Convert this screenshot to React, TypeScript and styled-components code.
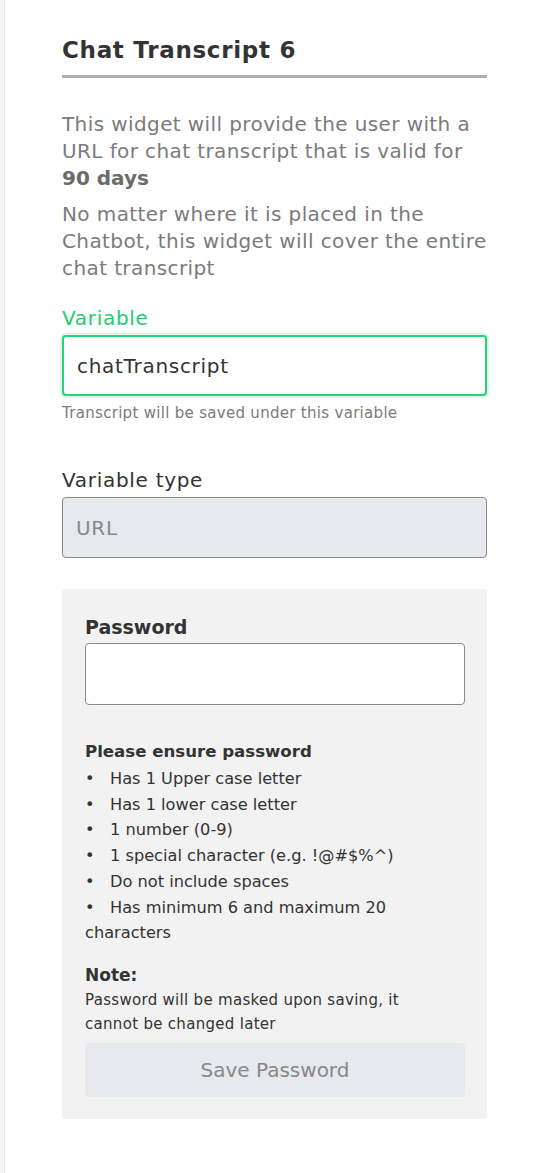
import React from "react";
import styled, { createGlobalStyle } from "styled-components";

const GlobalStyle = createGlobalStyle`
  html, body {
    margin: 0;
    padding: 0;
    background: #ffffff;
  }
  body {
    font-family: "DejaVu Sans", "Noto Sans", sans-serif;
  }
  * { box-sizing: border-box; }
`;

const Page = styled.div`
  display: flex;
  min-height: 1173px;
`;

const Rail = styled.div`
  width: 5px;
  flex: none;
  background: #f5f5f7;
  border-right: 1px solid #e4e4ea;
`;

const Content = styled.div`
  width: 425px;
  margin-left: 57px;
  padding-top: 34px;
  display: flex;
  flex-direction: column;
`;

const Title = styled.h1`
  margin: 0;
  font-size: 23px;
  font-weight: 700;
  letter-spacing: 0.7px;
  color: #333333;
  line-height: 32px;
  padding-bottom: 9px;
  border-bottom: 3px solid #abafb1;
`;

const Desc = styled.p`
  margin: 0;
  font-size: 20px;
  letter-spacing: 0.4px;
  line-height: 27px;
  color: #7b7b7b;
  & + & { margin-top: 9px; }
  b { font-weight: 700; color: #6b6b6b; letter-spacing: 0; }
`;

const DescBlock = styled.div`
  margin-top: 33px;
`;

const Label = styled.label<{ $active?: boolean }>`
  display: block;
  font-size: 20px;
  letter-spacing: 0.7px;
  line-height: 26px;
  color: ${p => (p.$active ? "#1fcc6e" : "#333333")};
  margin-bottom: 4px;
`;

const Field = styled.div<{ $gap: number }>`
  margin-top: ${p => p.$gap}px;
`;

const TextInput = styled.input<{ $focus?: boolean }>`
  display: block;
  width: 100%;
  height: 61px;
  padding: 0 13px;
  font-family: inherit;
  font-size: 20px;
  letter-spacing: 0.7px;
  color: ${p => (p.$focus ? "#333333" : "#888888")};
  background: ${p => (p.$focus ? "#ffffff" : "#e8e9ee")};
  border: ${p => (p.$focus ? "2px solid #2ad37a" : "1px solid #8a8a8a")};
  border-radius: 4px;
  box-shadow: ${p => (p.$focus ? "0 0 0 2px #dff5ea" : "none")};
  outline: none;
  caret-color: #333;
`;

const Help = styled.div`
  margin-top: 8px;
  font-size: 15px;
  letter-spacing: 0.3px;
  color: #7b7b7b;
`;

const Panel = styled.section`
  margin-top: 31px;
  background: #f2f2f2;
  border-radius: 4px;
  padding: 25px 22px 22px 23px;
`;

const PanelLabel = styled.div`
  font-size: 19px;
  font-weight: 700;
  color: #333333;
  line-height: 26px;
  margin-bottom: 3px;
`;

const PwInput = styled.input`
  display: block;
  width: 100%;
  height: 62px;
  background: #ffffff;
  border: 1px solid #8a8a8a;
  border-radius: 4px;
  outline: none;
`;

const RulesTitle = styled.div`
  margin-top: 34px;
  font-size: 16.6px;
  font-weight: 700;
  color: #333333;
  line-height: 25px;
`;

const Rules = styled.ul`
  margin: 2px 0 0;
  padding: 0;
  list-style: none;
  font-size: 16.2px;
  line-height: 25.7px;
  color: #333333;
`;

const Rule = styled.li`
  &::before {
    content: "•";
    display: inline-block;
    width: 25px;
  }
`;

const NoteTitle = styled.div`
  margin-top: 17px;
  font-size: 17px;
  font-weight: 700;
  color: #333333;
  line-height: 25px;
`;

const NoteText = styled.div`
  max-width: 360px;
  font-size: 15px;
  letter-spacing: 0.3px;
  line-height: 24px;
  color: #333333;
`;

const SaveButton = styled.button`
  display: block;
  width: 100%;
  height: 54px;
  margin-top: 7px;
  border: none;
  border-radius: 4px;
  background: #e8e9ee;
  color: #888888;
  font-family: inherit;
  font-size: 20px;
`;

const rules = [
  "Has 1 Upper case letter",
  "Has 1 lower case letter",
  "1 number (0-9)",
  "1 special character (e.g. !@#$%^)",
  "Do not include spaces",
  "Has minimum 6 and maximum 20 characters",
];

export default function App() {
  return (
    <>
      <GlobalStyle />
      <Page>
        <Rail />
        <Content>
          <Title>Chat Transcript 6</Title>
          <DescBlock>
            <Desc>
              This widget will provide the user with a URL for chat transcript that is valid for <b>90 days</b>
            </Desc>
            <Desc>No matter where it is placed in the Chatbot, this widget will cover the entire chat transcript</Desc>
          </DescBlock>
          <Field $gap={23}>
            <Label $active>Variable</Label>
            <TextInput $focus defaultValue="chatTranscript" />
            <Help>Transcript will be saved under this variable</Help>
          </Field>
          <Field $gap={45}>
            <Label>Variable type</Label>
            <TextInput value="URL" disabled readOnly />
          </Field>
          <Panel>
            <PanelLabel>Password</PanelLabel>
            <PwInput type="password" />
            <RulesTitle>Please ensure password</RulesTitle>
            <Rules>
              {rules.map(r => (
                <Rule key={r}>{r}</Rule>
              ))}
            </Rules>
            <NoteTitle>Note:</NoteTitle>
            <NoteText>Password will be masked upon saving, it cannot be changed later</NoteText>
            <SaveButton disabled>Save Password</SaveButton>
          </Panel>
        </Content>
      </Page>
    </>
  );
}
